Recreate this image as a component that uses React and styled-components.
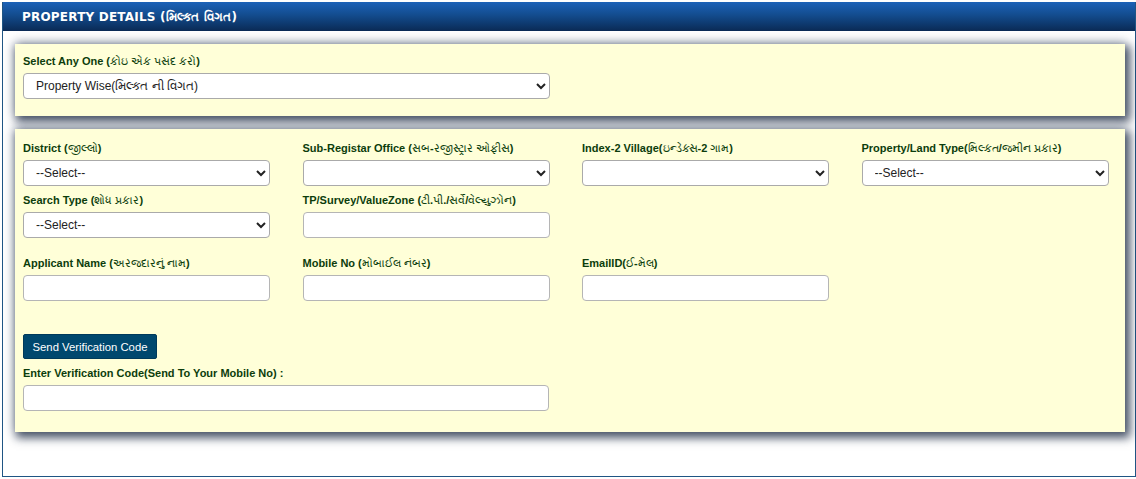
import React from 'react'
import styled, { createGlobalStyle } from 'styled-components'

const GlobalStyle = createGlobalStyle`
  body {
    margin: 0;
    background: #fff;
    font-family: 'Liberation Sans', Arial, 'Noto Sans', sans-serif;
  }
`

const Panel = styled.section`
  margin: 2px 0 0 2px;
  width: 1134px;
  box-sizing: border-box;
  border: 1px solid #1f5584;
  border-top: none;
`

const Header = styled.header`
  height: 29px;
  display: flex;
  align-items: center;
  padding-left: 19px;
  background: linear-gradient(to bottom, #1c62b8 0%, #134c8e 45%, #0a2a55 100%);
  color: #fff;
  font-family: 'DejaVu Sans', Verdana, sans-serif;
  font-weight: bold;
  font-size: 12px;
  letter-spacing: 0.2px;
`

const Body = styled.div`
  display: flex;
  flex-direction: column;
  gap: 13px;
  padding: 13px 10px 44px 12px;
`

const Card = styled.div`
  background: #ffffd8;
  padding: ${p => p.$pad || '10px 16px 17px 8px'};
  box-shadow: 3px 4px 9px 2px rgba(20, 35, 60, 0.75), 0 -2px 10px rgba(60, 80, 110, 0.35);
`

const Row = styled.div`
  display: grid;
  grid-template-columns: repeat(4, 247px);
  column-gap: 32.5px;
  margin-top: ${p => p.$top || 0}px;
`

const Field = styled.div`
  display: flex;
  flex-direction: column;
  grid-column: span ${p => p.$span || 1};
`

const Label = styled.label`
  display: block;
  font-size: 11px;
  font-weight: bold;
  line-height: 14px;
  color: #0c3d0c;
  margin-bottom: 5px;
  white-space: nowrap;
`

// Gujarati runs render in a regular weight in the original
const Native = styled.span`
  font-weight: normal;
`

const Select = styled.select`
  height: 26px;
  box-sizing: border-box;
  border: 1px solid #aaa;
  border-radius: 4px;
  background: #fff;
  font-family: 'Liberation Sans', Arial, sans-serif;
  font-size: 12px;
  color: #222;
  padding: 0 8px;
`

const Input = styled.input`
  height: 26px;
  box-sizing: border-box;
  border: 1px solid #b5b5b5;
  border-radius: 4px;
  background: #fff;
  font-size: 12px;
`

const Button = styled.button`
  margin-top: 33px;
  width: 134px;
  height: 25px;
  border: 1px solid #003a5a;
  border-radius: 2px;
  background: #00486e;
  color: #fff;
  font-family: 'Liberation Sans', Arial, sans-serif;
  font-size: 11.3px;
  padding: 0;
`

const Wide = styled.div`
  width: 526px;
  display: flex;
  flex-direction: column;
  margin-top: 7px;
`

const LabelText = ({ text }) => (
  <Label>
    {text.split(/([\u0A80-\u0AFF]+)/).map((part, i) =>
      /[\u0A80-\u0AFF]/.test(part) ? <Native key={i}>{part}</Native> : part
    )}
  </Label>
)

const SelectField = ({ label, value, span }) => (
  <Field $span={span}>
    <LabelText text={label} />
    <Select defaultValue={value}>
      <option value={value}>{value}</option>
    </Select>
  </Field>
)

const InputField = ({ label }) => (
  <Field>
    <LabelText text={label} />
    <Input type='text' />
  </Field>
)

export default function App() {
  return (
    <>
      <GlobalStyle />
      <Panel>
        <Header>PROPERTY DETAILS (મિલ્કત વિગત)</Header>
        <Body>
          <Card>
            <Row>
              <SelectField span={2} label='Select Any One (કોઇ એક પસંદ કરો)' value='Property Wise(મિલ્કત ની વિગત)' />
            </Row>
          </Card>
          <Card $pad='12px 16px 21px 8px'>
            <Row>
              <SelectField label='District (જીલ્લો)' value='--Select--' />
              <SelectField label='Sub-Registar Office (સબ-રજીસ્ટ્રાર ઓફીસ)' value='' />
              <SelectField label='Index-2 Village(ઇન્ડેક્સ-2 ગામ)' value='' />
              <SelectField label='Property/Land Type(મિલ્કત/જમીન પ્રકાર)' value='--Select--' />
            </Row>
            <Row $top={7}>
              <SelectField label='Search Type (શોધ પ્રકાર)' value='--Select--' />
              <InputField label='TP/Survey/ValueZone (ટી.પી./સર્વે/વેલ્યુઝોન)' />
            </Row>
            <Row $top={18}>
              <InputField label='Applicant Name (અરજદારનું નામ)' />
              <InputField label='Mobile No (મોબાઈલ નંબર)' />
              <InputField label='EmailID(ઈ-મેલ)' />
            </Row>
            <Button type='button'>Send Verification Code</Button>
            <Wide>
              <LabelText text='Enter Verification Code(Send To Your Mobile No) :' />
              <Input type='text' />
            </Wide>
          </Card>
        </Body>
      </Panel>
    </>
  )
}
